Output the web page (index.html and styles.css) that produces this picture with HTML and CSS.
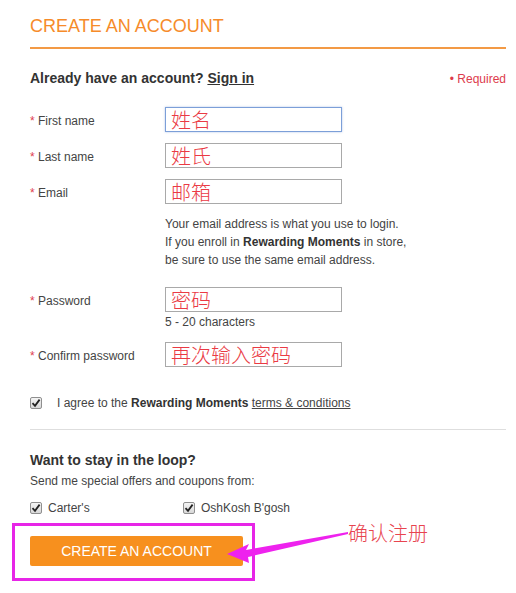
FILE: index.html
```html
<!DOCTYPE html>
<html lang="en">
<head>
  <meta charset="UTF-8" />
  <meta name="viewport" content="width=device-width, initial-scale=1.0"/>
  <title>Create an Account</title>
  <link rel="stylesheet" href="styles.css">
</head>
<body>
  <div class="page">
    <h1 class="title">CREATE AN ACCOUNT</h1>

    <div class="signin-bar">
      <p class="signin">Already have an account? <a href="#">Sign in</a></p>
      <span class="required">&bull; Required</span>
    </div>

    <form class="form">
      <div class="row">
        <label for="first"><span class="star">*</span> First name</label>
        <div class="field"><input type="text" id="first" class="focused" value="姓名" /></div>
      </div>

      <div class="row">
        <label for="last"><span class="star">*</span> Last name</label>
        <div class="field"><input type="text" id="last" value="姓氏" /></div>
      </div>

      <div class="row">
        <label for="email"><span class="star">*</span> Email</label>
        <div class="field">
          <input type="text" id="email" value="邮箱" />
          <p class="note email-note">Your email address is what you use to login.<br>
            If you enroll in <b>Rewarding Moments</b> in store,<br>
            be sure to use the same email address.</p>
        </div>
      </div>

      <div class="row">
        <label for="password"><span class="star">*</span> Password</label>
        <div class="field">
          <input type="text" id="password" value="密码" />
          <p class="note pw-note">5 - 20 characters</p>
        </div>
      </div>

      <div class="row">
        <label for="confirm"><span class="star">*</span> Confirm password</label>
        <div class="field"><input type="text" id="confirm" value="再次输入密码" /></div>
      </div>
    </form>

    <div class="agree">
      <span class="chk"><svg width="10" height="10" viewBox="0 0 10 10"><path d="M1.5 5.2 L4 7.8 L8.6 1.6" fill="none" stroke="#222" stroke-width="1.8"/></svg></span>
      <span>I agree to the <b>Rewarding Moments</b> <a href="#">terms &amp; conditions</a></span>
    </div>

    <div class="loop">
      <h2>Want to stay in the loop?</h2>
      <p>Send me special offers and coupons from:</p>
      <div class="brands">
        <div class="brand">
          <span class="chk"><svg width="10" height="10" viewBox="0 0 10 10"><path d="M1.5 5.2 L4 7.8 L8.6 1.6" fill="none" stroke="#222" stroke-width="1.8"/></svg></span>
          <span>Carter's</span>
        </div>
        <div class="brand">
          <span class="chk"><svg width="10" height="10" viewBox="0 0 10 10"><path d="M1.5 5.2 L4 7.8 L8.6 1.6" fill="none" stroke="#222" stroke-width="1.8"/></svg></span>
          <span>OshKosh B'gosh</span>
        </div>
      </div>
    </div>

    <div class="submit-area">
      <button type="button" class="submit">CREATE AN ACCOUNT</button>
      <span class="mark-box"></span>
      <svg class="mark-arrow" width="130" height="37" viewBox="0 0 130 37">
        <polygon points="7,26 29,16 26,22 128,4 128,6 28,29 29,35" fill="#ee22ee"/>
      </svg>
      <span class="mark-text">确认注册</span>
    </div>
  </div>
</body>
</html>
```

FILE: styles.css
```css
body {
  margin: 0;
  font-family: "Liberation Sans", Arial, sans-serif;
  color: #444;
  background: #fff;
}

.page {
  width: 476px;
  padding: 0 10px 0 30px;
}

.title {
  margin: 15px 0 0;
  padding-bottom: 10px;
  font-size: 18px;
  line-height: 22px;
  font-weight: normal;
  color: #f68b2a;
  border-bottom: 2px solid #f39a45;
}

.signin-bar {
  display: flex;
  justify-content: space-between;
  align-items: baseline;
  margin-top: 20px;
}

.signin {
  margin: 0;
  font-size: 14px;
  line-height: 18px;
  font-weight: bold;
  color: #333;
}

.signin a {
  color: #333;
}

.required {
  font-size: 12px;
  color: #dd3b4c;
}

.form {
  margin-top: 20px;
}

.row {
  display: grid;
  grid-template-columns: 135px 177px;
  align-items: start;
  margin-bottom: 11px;
}

.row label {
  box-sizing: border-box;
  height: 25px;
  padding-top: 4px;
  font-size: 12px;
  line-height: 21px;
  color: #444;
}

.star {
  color: #e04050;
}

.field input {
  display: block;
  box-sizing: border-box;
  width: 177px;
  height: 25px;
  margin: 0;
  padding: 0 5px;
  border: 1px solid #a9a9a9;
  font-family: "Noto Sans CJK SC", sans-serif;
  font-size: 20px;
  font-weight: 300;
  line-height: 23px;
  color: #ea3a44;
  outline: none;
}

.field input.focused {
  border-color: #7c9fd8;
  box-shadow: 0 0 2px rgba(100, 140, 210, 0.5);
}

.note {
  margin: 0;
  font-size: 12px;
  line-height: 18px;
  color: #444;
  white-space: nowrap;
}

.note b {
  color: #333;
}

.email-note {
  margin: 11px 0 7px;
}

.pw-note {
  margin-top: 1px;
  margin-bottom: 0;
}

.chk {
  display: inline-flex;
  align-items: center;
  justify-content: center;
  box-sizing: border-box;
  width: 12px;
  height: 12px;
  border: 1px solid #8f8f8f;
  border-radius: 2px;
  background: linear-gradient(to bottom, #f4f4f4, #d8d8d8);
}

.agree {
  display: flex;
  align-items: center;
  gap: 15px;
  margin-top: 27px;
  font-size: 12px;
  line-height: 18px;
  padding-bottom: 17px;
  border-bottom: 1px solid #dedede;
}

.agree b {
  color: #333;
}

.agree a {
  color: #444;
}

.loop h2 {
  margin: 21px 0 0;
  font-size: 14px;
  line-height: 18px;
  color: #333;
}

.loop p {
  margin: 3px 0 0;
  font-size: 12px;
  line-height: 18px;
}

.brands {
  display: flex;
  margin-top: 9px;
}

.brand {
  display: flex;
  align-items: center;
  gap: 6px;
  width: 153px;
  font-size: 12px;
  line-height: 18px;
}

.submit-area {
  position: relative;
  margin-top: 19px;
  height: 60px;
}

.submit {
  display: block;
  width: 213px;
  height: 30px;
  border: none;
  border-radius: 2px;
  background: #f7901e;
  color: #fff;
  font-family: "Liberation Sans", Arial, sans-serif;
  font-size: 14px;
  padding: 0;
}

.mark-box {
  position: absolute;
  left: -18px;
  top: -13px;
  width: 243px;
  height: 58px;
  box-sizing: border-box;
  border: 3px solid #e725e7;
}

.mark-arrow {
  position: absolute;
  left: 190px;
  top: -8px;
}

.mark-text {
  position: absolute;
  left: 318px;
  top: -15px;
  font-family: "Noto Sans CJK SC", sans-serif;
  font-size: 20px;
  font-weight: 300;
  line-height: 24px;
  color: #e8444f;
  white-space: nowrap;
}
```
